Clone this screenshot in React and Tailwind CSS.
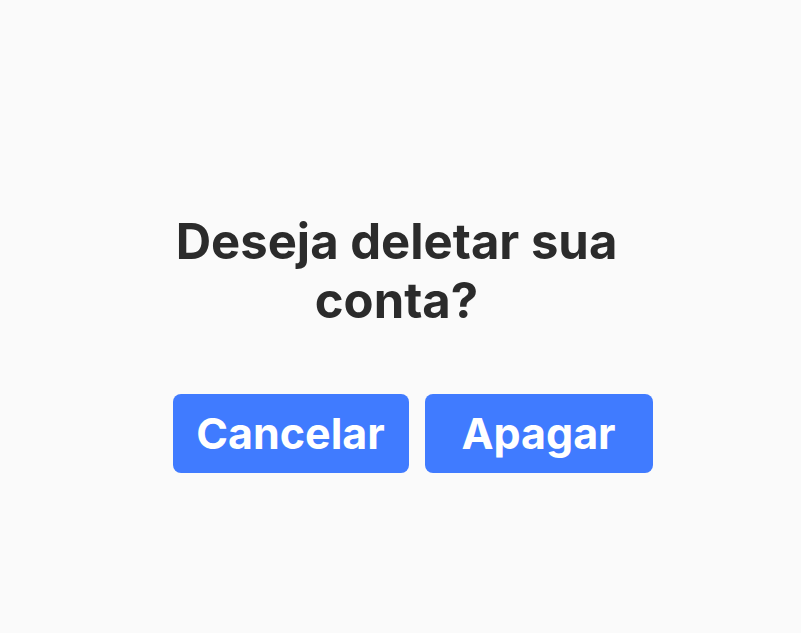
export default function App() {
  return (
    <main className="flex min-h-screen items-center justify-center bg-[#fafafa] pt-13 pl-6 font-[Inter,sans-serif]">
      <section className="flex w-full max-w-[480px] flex-col gap-16">
        <h1 className="pr-8 text-center text-[49px] leading-[59px] font-bold text-[#2b2b2b]">
          Deseja deletar sua conta?
        </h1>
        <div className="flex flex-wrap gap-4">
          <button type="button" className="h-[79px] w-[236px] rounded-lg bg-[#407bff] text-[43px] font-bold text-white">
            Cancelar
          </button>
          <button type="button" className="h-[79px] w-[228px] rounded-lg bg-[#407bff] text-[43px] font-bold text-white">
            Apagar
          </button>
        </div>
      </section>
    </main>
  );
}
